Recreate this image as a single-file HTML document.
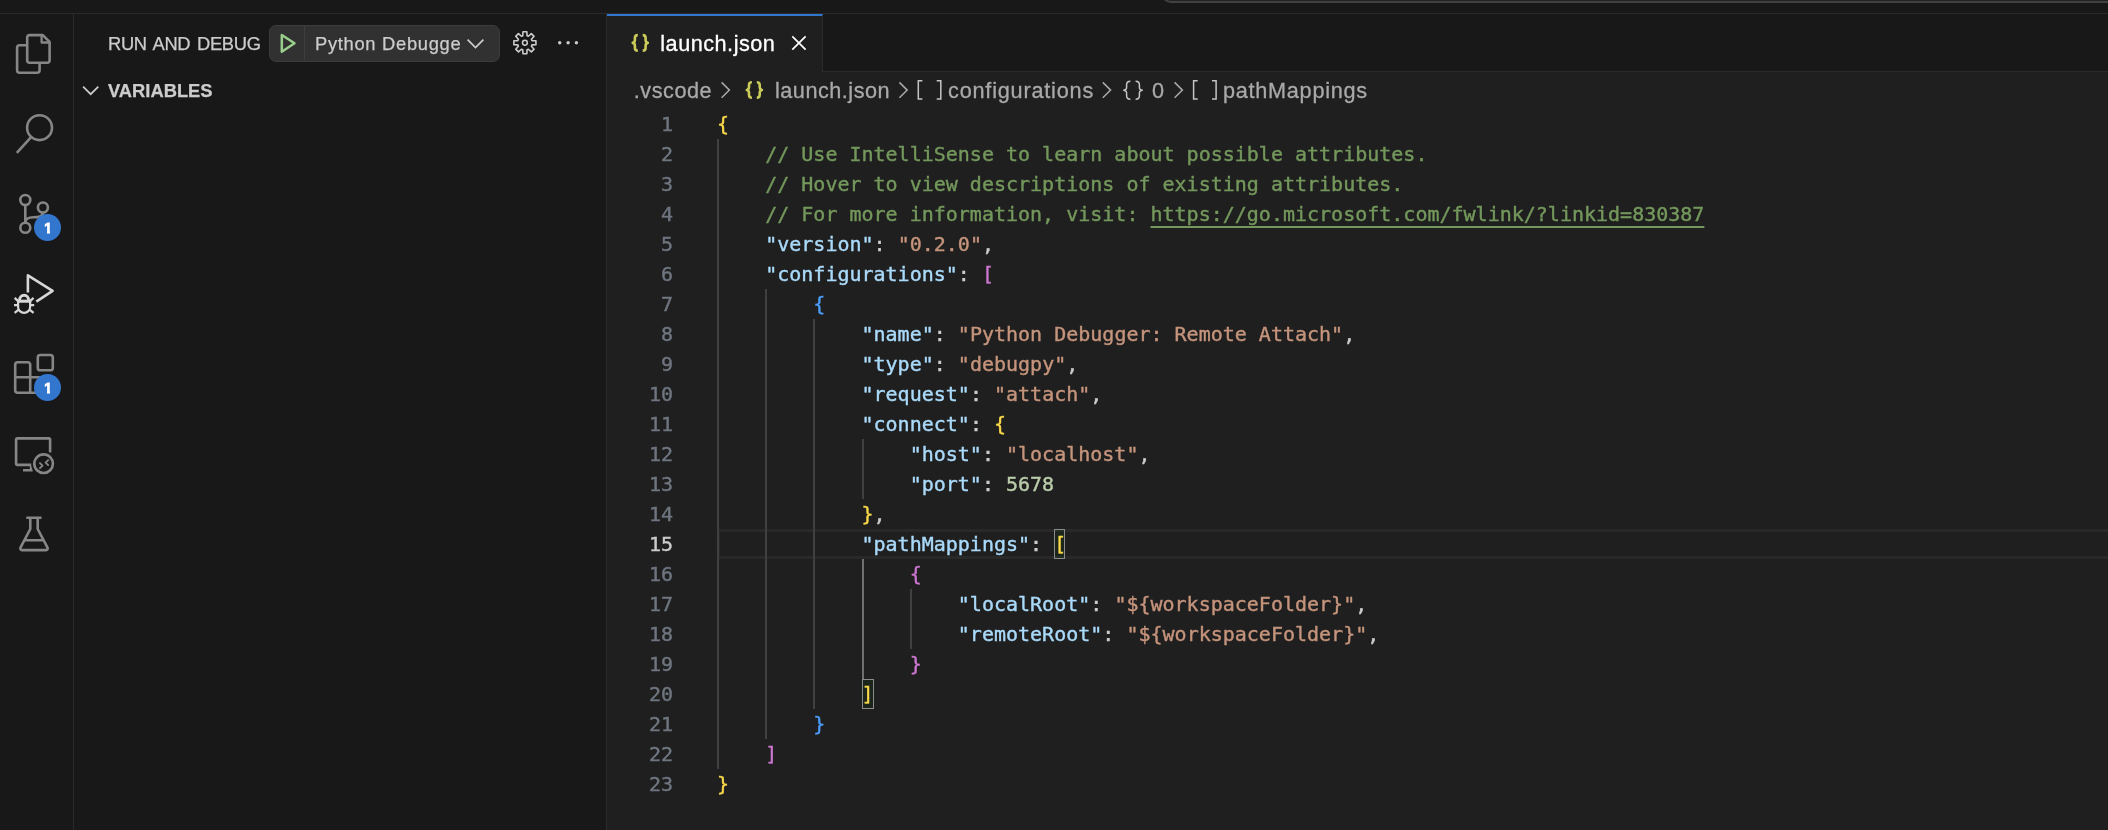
<!DOCTYPE html>
<html lang="en">
<head>
<meta charset="utf-8">
<title>launch.json - Run and Debug</title>
<style>
*{box-sizing:border-box;margin:0;padding:0}
html,body{width:2108px;height:830px;overflow:hidden;background:#181818}
body{position:relative;font-family:"Liberation Sans",sans-serif;color:#cccccc;-webkit-font-smoothing:antialiased}
.abs{position:absolute}
#root{position:absolute;left:0;top:0;width:2108px;height:830px;will-change:transform}
#titlebar{left:0;top:0;width:2108px;height:14px;background:#181818;border-bottom:1px solid #2b2b2b}
#cmd{left:1161px;top:-29px;width:1000px;height:32px;border:2px solid #414141;border-radius:10px;background:#222222}
#activity{left:0;top:14px;width:74px;height:816px;background:#181818;border-right:1px solid #2b2b2b}
#sidebar{left:74px;top:14px;width:533px;height:816px;background:#181818;border-right:1px solid #2b2b2b}
#editor{left:607px;top:14px;width:1501px;height:816px;background:#1f1f1f}
#tabbar{left:607px;top:14px;width:1501px;height:58px;background:#181818;border-bottom:1px solid #2b2b2b}
#tab{left:607px;top:14px;width:216px;height:58px;background:#1f1f1f;border-right:1px solid #2b2b2b;border-top:2px solid #3376cd}
.ui{-webkit-text-stroke:0.3px;font-size:21.67px;line-height:30px;white-space:pre}
.sm{-webkit-text-stroke:0.25px;font-size:18.33px;line-height:26px;white-space:pre}
.badge{width:27.2px;height:27.2px;border-radius:50%;background:#3376cd;color:#fff;font-size:15px;line-height:27.2px;text-align:center;-webkit-text-stroke:1.2px #fff}
.badge{padding-left:1px}.badge i{position:absolute;height:3.6px;background:#3376cd}
/* code */
#code{left:606px;top:109px;width:1502px;height:721px;-webkit-text-stroke:0.4px;font-family:"DejaVu Sans Mono","Liberation Mono",monospace;font-size:20px;line-height:30px;white-space:pre}
.ln{position:absolute;left:1px;width:66px;text-align:right;color:#6f7680;height:30px}
.ln.cur{color:#cccccc}
.cl{position:absolute;left:111px;height:30px;color:#cccccc}
.c{color:#74985c}.k{color:#aadafa}.s{color:#c5947c}.n{color:#bacdab}
.b1{color:#f9d849}.b2{color:#cc76d1}.b3{color:#4a9df8}
.u{text-decoration:underline;text-underline-offset:5px;text-decoration-thickness:2px}
.g{position:absolute;width:2px;background:#404040}
.g.a{background:#707070}
.bm{position:absolute;width:12px;height:30px;border:1.4px solid #8c8c8c;background:rgba(0,100,0,0.1)}
#curline{left:113px;top:420px;width:1389px;height:30px;border-top:3px solid #292929;border-bottom:3px solid #292929;border-left:1px solid #292929}
</style>
</head>
<body>
<div id="root">
<div id="titlebar" class="abs"></div>
<div id="cmd" class="abs"></div>
<div id="activity" class="abs"></div>
<div id="sidebar" class="abs"></div>
<div id="editor" class="abs"></div>
<div id="tabbar" class="abs"></div>
<div id="tab" class="abs"></div>

<!-- ACTIVITY ICONS -->
<svg class="abs" style="left:0;top:14px" width="74" height="600" viewBox="0 14 74 600" fill="none" stroke="#868686" stroke-width="2.6" stroke-linejoin="round" stroke-linecap="butt">
<!-- explorer -->
<path d="M27.2,60.2 V37.6 a2.5,2.5 0 0 1 2.5,-2.5 H42.8 L49.6,41.9 V60.2 a2.5,2.5 0 0 1 -2.5,2.5 H29.7 a2.5,2.5 0 0 1 -2.5,-2.5 Z M27.2,45.2 H19.6 a2.5,2.5 0 0 0 -2.5,2.5 V70.3 a2.5,2.5 0 0 0 2.5,2.5 H37.1 a2.5,2.5 0 0 0 2.5,-2.5 V62.7"/>
<path d="M41.6,35.6 V42.5 H49.2" stroke-width="2.3"/>
<!-- search -->
<circle cx="39.55" cy="127.65" r="12.45"/><path d="M31.3,136.9 L16.8,152.8"/>
<!-- scm -->
<circle cx="25.3" cy="200" r="5"/><circle cx="42.9" cy="207.5" r="5"/><circle cx="25.3" cy="227.7" r="5"/>
<path d="M25.3,205.2 V222.5 M42.9,212.7 C42.9,216.8 39,217.3 33.5,217.3 C28,217.3 25.3,218.5 25.3,222.5"/>
<!-- debug (active) -->
<g stroke="#d7d7d7"><path d="M27.9,292.5 V275.4 L52.6,290.8 L36.3,301.6"/>
<path d="M18.1,301.3 V306.9 a6,6 0 0 0 12,0 V301.3" stroke-width="2.2"/><path d="M17,301.2 H31.2" stroke-width="3.1"/><path d="M19.5,300.6 a4.6,5.4 0 0 1 9.2,0" stroke-width="2.9"/><path d="M14.7,297.9 L18.3,301.4 M33.5,297.9 L29.9,301.4 M14,305.1 H18.1 M30.1,305.1 H34.2 M14.6,312.8 L19,309.3 M33.6,312.8 L29.2,309.3" stroke-width="2.2"/></g>
<!-- extensions -->
<rect x="37.8" y="355" width="15" height="15.3" rx="2.4"/>
<path d="M30.2,392.8 H17.7 a2.5,2.5 0 0 1 -2.5,-2.5 V364.7 a2.5,2.5 0 0 1 2.5,-2.5 H27.7 a2.5,2.5 0 0 1 2.5,2.5 V392.8 H44 a2.5,2.5 0 0 0 2.5,-2.5 V377.3 H15.2"/>
<!-- remote -->
<path d="M50.1,452.5 V439.6 a1.2,1.2 0 0 0 -1.2,-1.2 H17.3 a1.2,1.2 0 0 0 -1.2,1.2 V463.7 a1.2,1.2 0 0 0 1.2,1.2 H31.1 V470.2 M23,470.2 H32.7"/>
<circle cx="43.6" cy="463.7" r="10.4" stroke="#181818" stroke-width="4.2"/><circle cx="43.6" cy="463.7" r="9.3"/>
<path d="M39.4,462.6 L42.6,465.6 L39.4,468.6 M48.7,459.6 L45.6,462.6 L48.7,465.6" stroke-width="1.8"/>
<!-- testing -->
<path d="M26.3,517.8 H41.5 M30.3,517.8 V529 L20.5,547.6 a1.7,1.7 0 0 0 1.5,2.5 H46 a1.7,1.7 0 0 0 1.5,-2.5 L37.7,529 V517.8 M24.7,540.3 H43.4"/>
</svg>

<div class="abs badge" style="left:34px;top:213.7px">1<i style="left:9px;top:16.9px;width:4px"></i><i style="left:16px;top:16.9px;width:4px"></i></div>
<div class="abs badge" style="left:34px;top:373.7px">1<i style="left:9px;top:16.9px;width:4px"></i><i style="left:16px;top:16.9px;width:4px"></i></div>
<svg class="abs" style="left:78px;top:80px" width="26" height="20" viewBox="78 80 26 20" fill="none"><path d="M83.1,86.6 L90.7,94.2 L98.3,86.6" stroke="#cccccc" stroke-width="1.7"/></svg>
<!-- SIDEBAR HEADER -->
<div class="abs sm" id="rad" style="letter-spacing:-0.3px;word-spacing:1.9px;left:108px;top:31px;color:#cccccc">RUN AND DEBUG</div>
<div class="abs" id="dd" style="left:269px;top:25px;width:231px;height:37px;background:#313131;border:1px solid #3c3c3c;border-radius:7px"></div>
<div class="abs" style="left:304px;top:26px;width:1.4px;height:34px;background:#3e3e3e"></div>
<div class="abs sm" id="pyd" style="letter-spacing:0.7px;left:315px;top:31px;color:#cccccc">Python Debugge</div>
<div class="abs sm" id="vars" style="left:108px;top:78px;font-weight:bold;color:#cccccc">VARIABLES</div>
<svg class="abs" style="left:260px;top:20px" width="340" height="90" viewBox="260 20 340 90" fill="none">
<path d="M281.8,35 L294.5,43.3 L281.8,51.7 Z" stroke="#99cf8c" stroke-width="2.5" stroke-linejoin="round"/>
<path d="M467.6,39.6 L475.5,47.5 L483.4,39.6" stroke="#cccccc" stroke-width="1.7"/>
<path d="M522.76,35.66 L522.95,31.72 L526.85,31.72 L527.04,35.66 L528.40,36.23 L531.32,33.57 L534.08,36.33 L531.42,39.25 L531.99,40.61 L535.93,40.80 L535.93,44.70 L531.99,44.89 L531.42,46.25 L534.08,49.17 L531.32,51.93 L528.40,49.27 L527.04,49.84 L526.85,53.78 L522.95,53.78 L522.76,49.84 L521.40,49.27 L518.48,51.93 L515.72,49.17 L518.38,46.25 L517.81,44.89 L513.87,44.70 L513.87,40.80 L517.81,40.61 L518.38,39.25 L515.72,36.33 L518.48,33.57 L521.40,36.23Z" stroke="#cccccc" stroke-width="1.6" stroke-linejoin="round"/>
<circle cx="524.9" cy="42.75" r="2.4" stroke="#cccccc" stroke-width="1.5"/>
<circle cx="559.7" cy="42.7" r="1.7" fill="#cccccc"/><circle cx="568.1" cy="42.7" r="1.7" fill="#cccccc"/><circle cx="576.4" cy="42.7" r="1.7" fill="#cccccc"/>
</svg>

<!-- TAB -->
<div class="abs ui" id="tabt" style="letter-spacing:0.5px;left:660.3px;top:29px;color:#ffffff">launch.json</div>
<!-- BREADCRUMBS -->
<div class="abs ui" id="bc1" style="letter-spacing:0.55px;left:633.7px;top:76px;color:#a9a9a9">.vscode</div>
<div class="abs ui" id="bc2" style="letter-spacing:0.5px;left:775px;top:76px;color:#a9a9a9">launch.json</div>
<div class="abs ui" id="bc3" style="letter-spacing:0.8px;left:948px;top:76px;color:#a9a9a9">configurations</div>
<div class="abs ui" id="bc4" style="left:1152px;top:76px;color:#a9a9a9">0</div>
<div class="abs ui" id="bc5" style="letter-spacing:0.73px;left:1223px;top:76px;color:#a9a9a9">pathMappings</div>
<svg class="abs" style="left:607px;top:14px" width="800" height="95" viewBox="607 14 800 95" fill="none">
<path d="M637.80,35.10 C635.70,35.10 634.90,35.90 634.90,37.80 V40.00 C634.90,41.70 634.50,42.50 632.70,42.85 C634.50,43.20 634.90,44.00 634.90,45.70 V47.90 C634.90,49.80 635.70,50.60 637.80,50.60 M642.70,35.10 C644.80,35.10 645.60,35.90 645.60,37.80 V40.00 C645.60,41.70 646.00,42.50 647.80,42.85 C646.00,43.20 645.60,44.00 645.60,45.70 V47.90 C645.60,49.80 644.80,50.60 642.70,50.60" stroke="#cbcb5a" stroke-width="2.6" stroke-linejoin="round"/>
<path d="M751.90,82.20 C749.80,82.20 749.00,83.00 749.00,84.90 V87.10 C749.00,88.80 748.60,89.60 746.80,89.95 C748.60,90.30 749.00,91.10 749.00,92.80 V95.00 C749.00,96.90 749.80,97.70 751.90,97.70 M756.80,82.20 C758.90,82.20 759.70,83.00 759.70,84.90 V87.10 C759.70,88.80 760.10,89.60 761.90,89.95 C760.10,90.30 759.70,91.10 759.70,92.80 V95.00 C759.70,96.90 758.90,97.70 756.80,97.70" stroke="#cbcb5a" stroke-width="2.6" stroke-linejoin="round"/>
<path d="M792.3,36.3 L805.6,49.6 M805.6,36.3 L792.3,49.6" stroke="#ffffff" stroke-width="1.7"/>
<path d="M721.6,82.4 L729.4,90.1 L721.6,97.8 M899.4,82.4 L907.2,90.1 L899.4,97.8 M1102.8,82.4 L1110.6,90.1 L1102.8,97.8 M1174.6,82.4 L1182.4,90.1 L1174.6,97.8" stroke="#a9a9a9" stroke-width="1.5"/>
<path d="M922.4,80.7 H918.3 V99.1 H922.4 M936.7,80.7 H940.8 V99.1 H936.7 M1197.7,80.7 H1193.6 V99.1 H1197.7 M1212.0,80.7 H1216.1 V99.1 H1212.0" stroke="#c5c5c5" stroke-width="1.5"/>
<path d="M1130.4,81.2 C1127.6,81.2 1126.6,82.2 1126.6,84.7 V87.2 C1126.6,89.2 1125.6,90.2 1123.2,90.2 C1125.6,90.2 1126.6,91.2 1126.6,93.2 V95.7 C1126.6,98.2 1127.6,99.2 1130.4,99.2 M1135.6,81.2 C1138.4,81.2 1139.4,82.2 1139.4,84.7 V87.2 C1139.4,89.2 1140.4,90.2 1142.8,90.2 C1140.4,90.2 1139.4,91.2 1139.4,93.2 V95.7 C1139.4,98.2 1138.4,99.2 1135.6,99.2" stroke="#c5c5c5" stroke-width="1.5"/>
</svg>

<!-- CODE -->
<div id="code" class="abs">
<div id="curline" class="abs"></div>
<div class="g" style="left:111px;top:30px;height:630px"></div>
<div class="g" style="left:159px;top:180px;height:450px"></div>
<div class="g" style="left:207px;top:210px;height:390px"></div>
<div class="g" style="left:256px;top:330px;height:60px"></div>
<div class="g a" style="left:256px;top:450px;height:120px"></div>
<div class="g" style="left:304px;top:480px;height:60px"></div>
<div class="bm" style="left:448px;top:420px;width:11px"></div>
<div class="bm" style="left:256px;top:570px;width:12px"></div>
<div class="ln" style="top:0px">1</div>
<div class="cl" style="top:0px"><span class="b1">{</span></div>
<div class="ln" style="top:30px">2</div>
<div class="cl" style="top:30px">    <span class="c">// Use IntelliSense to learn about possible attributes.</span></div>
<div class="ln" style="top:60px">3</div>
<div class="cl" style="top:60px">    <span class="c">// Hover to view descriptions of existing attributes.</span></div>
<div class="ln" style="top:90px">4</div>
<div class="cl" style="top:90px">    <span class="c">// For more information, visit: </span><span class="c u">https://go.microsoft.com/fwlink/?linkid=830387</span></div>
<div class="ln" style="top:120px">5</div>
<div class="cl" style="top:120px">    <span class="k">"version"</span>: <span class="s">"0.2.0"</span>,</div>
<div class="ln" style="top:150px">6</div>
<div class="cl" style="top:150px">    <span class="k">"configurations"</span>: <span class="b2">[</span></div>
<div class="ln" style="top:180px">7</div>
<div class="cl" style="top:180px">        <span class="b3">{</span></div>
<div class="ln" style="top:210px">8</div>
<div class="cl" style="top:210px">            <span class="k">"name"</span>: <span class="s">"Python Debugger: Remote Attach"</span>,</div>
<div class="ln" style="top:240px">9</div>
<div class="cl" style="top:240px">            <span class="k">"type"</span>: <span class="s">"debugpy"</span>,</div>
<div class="ln" style="top:270px">10</div>
<div class="cl" style="top:270px">            <span class="k">"request"</span>: <span class="s">"attach"</span>,</div>
<div class="ln" style="top:300px">11</div>
<div class="cl" style="top:300px">            <span class="k">"connect"</span>: <span class="b1">{</span></div>
<div class="ln" style="top:330px">12</div>
<div class="cl" style="top:330px">                <span class="k">"host"</span>: <span class="s">"localhost"</span>,</div>
<div class="ln" style="top:360px">13</div>
<div class="cl" style="top:360px">                <span class="k">"port"</span>: <span class="n">5678</span></div>
<div class="ln" style="top:390px">14</div>
<div class="cl" style="top:390px">            <span class="b1">}</span>,</div>
<div class="ln cur" style="top:420px">15</div>
<div class="cl" style="top:420px">            <span class="k">"pathMappings"</span>: <span class="b1">[</span></div>
<div class="ln" style="top:450px">16</div>
<div class="cl" style="top:450px">                <span class="b2">{</span></div>
<div class="ln" style="top:480px">17</div>
<div class="cl" style="top:480px">                    <span class="k">"localRoot"</span>: <span class="s">"${workspaceFolder}"</span>,</div>
<div class="ln" style="top:510px">18</div>
<div class="cl" style="top:510px">                    <span class="k">"remoteRoot"</span>: <span class="s">"${workspaceFolder}"</span>,</div>
<div class="ln" style="top:540px">19</div>
<div class="cl" style="top:540px">                <span class="b2">}</span></div>
<div class="ln" style="top:570px">20</div>
<div class="cl" style="top:570px">            <span class="b1">]</span></div>
<div class="ln" style="top:600px">21</div>
<div class="cl" style="top:600px">        <span class="b3">}</span></div>
<div class="ln" style="top:630px">22</div>
<div class="cl" style="top:630px">    <span class="b2">]</span></div>
<div class="ln" style="top:660px">23</div>
<div class="cl" style="top:660px"><span class="b1">}</span></div>
</div>
</div>
</body>
</html>
